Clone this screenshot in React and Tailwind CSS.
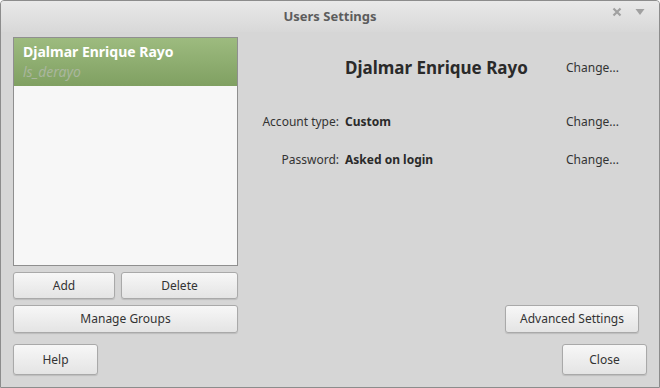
import React from "react";

const font = { fontFamily: '"Noto Sans", "Open Sans", sans-serif' };

function Button({ children, className = "" }) {
  return (
    <button
      className={`flex items-center justify-center rounded-[3px] border border-[#a9a9a9] bg-gradient-to-b from-[#f7f7f7] to-[#e4e4e4] text-[12px] text-[#333] shadow-[0_1px_1px_rgba(0,0,0,0.12)] ${className}`}
    >
      {children}
    </button>
  );
}

export default function App() {
  return (
    <div className="h-[388px] w-[660px] bg-white" style={font}>
      <div className="flex h-full w-full flex-col overflow-hidden rounded-t-[4px] border border-[#8c8c8c] bg-[#d6d6d6]">
        {/* title bar */}
        <div className="relative flex h-[31px] items-center justify-center bg-gradient-to-b from-[#e9e9e9] to-[#d8d8d8]">
          <span className="text-[13px] font-bold text-[#5c5c5c]">Users Settings</span>
          <div className="absolute right-[14px] top-[6px] flex items-center gap-[13px]">
            <svg width="10" height="10" viewBox="0 0 10 10">
              <path d="M1.5 1.5 L8.5 8.5 M8.5 1.5 L1.5 8.5" stroke="#a0a0a0" strokeWidth="2.2" />
            </svg>
            <svg width="10" height="8" viewBox="0 0 10 8">
              <path d="M0.5 1 L9.5 1 L5 7 Z" fill="#a0a0a0" />
            </svg>
          </div>
        </div>

        <div className="flex flex-1 flex-col px-[12px] pt-[5px]">
          <div className="flex">
            {/* left column */}
            <div className="flex w-[225px] flex-col">
              <div className="h-[229px] border border-[#8f8f8f] bg-[#f7f7f7]">
                <div className="flex h-[48px] flex-col justify-center bg-gradient-to-b from-[#9dbb7f] to-[#80a062] pl-[9px] leading-[20px]">
                  <span className="text-[14px] font-bold text-white">Djalmar Enrique Rayo</span>
                  <span className="text-[14px] italic text-[#a9b69d]">ls_derayo</span>
                </div>
              </div>
              <div className="mt-[6px] flex gap-[6px]">
                <Button className="h-[27px] w-[102px]">Add</Button>
                <Button className="h-[27px] flex-1">Delete</Button>
              </div>
              <Button className="mt-[6px] h-[28px] w-full">Manage Groups</Button>
            </div>

            {/* right column */}
            <div className="ml-[12px] flex flex-1 flex-col">
              <div className="grid grid-cols-[89px_215px_auto] items-center gap-x-[6px] pt-[13px] text-[12px] leading-[17px] text-[#333]">
                <span />
                <span className="flex h-[34px] items-center text-[17px] font-bold text-[#2a2a2a]">
                  Djalmar Enrique Rayo
                </span>
                <span>Change...</span>

                <span className="mt-[29px] text-right">Account type:</span>
                <span className="mt-[29px] font-bold text-[#2a2a2a]">Custom</span>
                <span className="mt-[29px]">Change...</span>

                <span className="mt-[21px] text-right">Password:</span>
                <span className="mt-[21px] font-bold text-[#2a2a2a]">Asked on login</span>
                <span className="mt-[21px]">Change...</span>
              </div>
              <div className="mt-auto flex justify-end pr-[8px]">
                <Button className="h-[28px] w-[134px]">Advanced Settings</Button>
              </div>
            </div>
          </div>

          <div className="mt-[11px] flex justify-between">
            <Button className="h-[31px] w-[85px]">Help</Button>
            <Button className="h-[31px] w-[85px]">Close</Button>
          </div>
        </div>
      </div>
    </div>
  );
}
